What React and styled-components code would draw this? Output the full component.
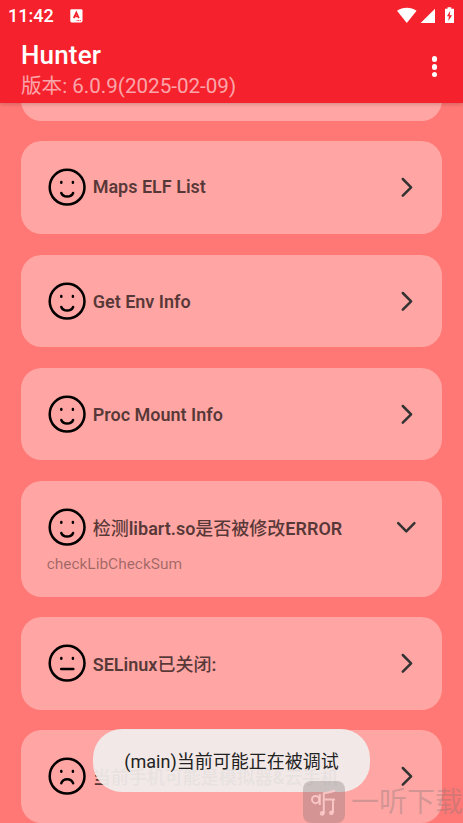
import React from "react";
import styled, { createGlobalStyle } from "styled-components";

const App = () => {
  return (
    <React.Fragment>
      <GlobalStyle />
      <Screen>
        <Header>
          <StatusBar>
            <Clock>11:42</Clock>
            <InputIcon />
            <StatusIcons />
          </StatusBar>
          <ToolBar>
            <div>
              <AppTitle>Hunter</AppTitle>
              <Version>版本: 6.0.9(2025-02-09)</Version>
            </div>
            <MoreButton aria-label="more">
              <Dot />
              <Dot />
              <Dot />
            </MoreButton>
          </ToolBar>
        </Header>
        <List>
          <Card />
          {items.map((item) => (
            <CheckItem key={item.id} {...item} />
          ))}
        </List>
        <Toast>(main)当前可能正在被调试</Toast>
        <Watermark>
          <WatermarkLogo />
          <WatermarkText>一听下载</WatermarkText>
        </Watermark>
      </Screen>
    </React.Fragment>
  );
};

const items = [
  { id: "maps", mood: "happy", title: ["Maps ELF List"], shift: -1 },
  { id: "env", mood: "happy", title: ["Get Env Info"], shift: 3 },
  { id: "mount", mood: "happy", title: ["Proc Mount Info"], shift: 3 },
  {
    id: "libart",
    mood: "happy",
    title: ["", "检测", "libart.so", "是否被修改", "ERROR"],
    detail: "checkLibCheckSum",
    shift: 4,
  },
  { id: "selinux", mood: "flat", title: ["SELinux", "已关闭", ":"], shift: 3 },
  {
    id: "emulator",
    mood: "sad",
    title: ["", "当前手机可能是模拟器", "&", "云手机"],
    shift: 3,
  },
];

const CheckItem = (props) => {
  const { mood, title, detail, shift } = props;

  return (
    <Card $open={!!detail}>
      <Row>
        <Face mood={mood} />
        {/* odd parts of a title are chinese */}
        <Title $shift={shift}>
          {title.map((part, i) =>
            i % 2 ? <Han key={i}>{part}</Han> : <span key={i}>{part}</span>
          )}
        </Title>
        <Arrow open={!!detail} />
      </Row>
      {detail && <Detail>{detail}</Detail>}
    </Card>
  );
};

const mouths = {
  happy: "M14.3 26C16.2 30.8 24.2 30.8 26.1 26",
  flat: "M14.2 26.1H26.3",
  sad: "M14.3 27.2C16.2 21.8 24.2 21.8 26.1 27.2",
};

const Face = ({ mood }) => (
  <FaceSvg viewBox="0 0 40 40">
    <circle cx="20.1" cy="20.2" r="17.4" />
    <path d={mouths[mood]} />
    <path d="M14.3 14.9V15.8M25.9 14.9V15.8" />
  </FaceSvg>
);

const Arrow = ({ open }) => (
  <ArrowSvg viewBox="0 0 24 24">
    <path d={open ? "M4.2 8.2L12.3 16.3L20.4 8.2" : "M8.8 4L17.1 12.3L8.8 20.6"} />
  </ArrowSvg>
);

const InputIcon = () => (
  <svg width="13" height="14" viewBox="0 0 13 14">
    <rect x="0.3" y="0.2" width="12.2" height="13.2" rx="1.4" fill="#fff" />
    <path
      d="M3.7 9.2L6.3 3.6L8.9 9.2M4.8 7.4H7.8"
      fill="none"
      stroke="#f5222d"
      strokeWidth="1.7"
    />
    <path d="M6.6 11.6H11" stroke="#f5222d" strokeWidth="1" strokeDasharray="1 0.6" />
  </svg>
);

const StatusIcons = () => (
  <StatusSvg viewBox="0 0 60 18">
    <path d="M0 3.7C5.6 -0.4 14.1 -0.4 19.6 3.7L9.8 16Z" />
    <path d="M38 1.8V16H23.6Z" />
    <path d="M50.5 0.2h3.8v1.5h2.7v14.3h-9v-14.3h2.5z" />
    <path d="M53.3 3.8L49.9 9.3H51.9L51.3 13.9L55.1 8.2H52.7Z" fill="#f5222d" />
  </StatusSvg>
);

const WatermarkLogo = () => (
  <LogoSvg viewBox="0 0 42 42">
    <rect width="42" height="42" rx="8" fill="rgba(128,118,120,0.34)" />
    <g fill="none" stroke="rgba(255,205,205,0.85)" strokeWidth="2">
      <circle cx="12.6" cy="18.6" r="3.6" />
      <path d="M16.8 13V24M32 9.4C28 12 24 11.4 20.8 12.2V32.4M21 18.4H32M30 18.4V31.6" />
    </g>
    <g fill="rgba(255,205,205,0.85)">
      <circle cx="19.2" cy="32.4" r="2.4" />
      <circle cx="28.4" cy="31.8" r="2.4" />
    </g>
  </LogoSvg>
);

const GlobalStyle = createGlobalStyle`
  * {
    box-sizing: border-box;
  }
  body {
    margin: 0;
    overflow: hidden;
    background: #ff7875;
    font-family: Roboto, "Noto Sans CJK SC", sans-serif;
  }
`;

const Screen = styled.div`
  position: relative;
  display: flex;
  flex-direction: column;
  width: 463px;
  height: 823px;
  overflow: hidden;
  background: #ff7875;
`;

const Header = styled.header`
  flex: none;
  height: 103px;
  background: #f5222d;
  color: #fff;
  box-shadow: 0 1px 4px rgba(0, 0, 0, 0.2);
  z-index: 1;
`;

const StatusBar = styled.div`
  display: flex;
  align-items: center;
  height: 32px;
  padding: 0 8px;
`;

const Clock = styled.span`
  width: 62px;
  font-size: 18px;
  font-weight: 500;
  line-height: 32px;
`;

const StatusSvg = styled.svg`
  width: 60px;
  height: 18px;
  margin-left: auto;
  margin-right: -2px;
  margin-top: -1px;
  fill: #fff;
`;

const ToolBar = styled.div`
  display: flex;
  justify-content: space-between;
  padding: 8px 20.5px 0 21px;
`;

const AppTitle = styled.h1`
  margin: 0;
  font-size: 26px;
  font-weight: 500;
  line-height: 30px;
  letter-spacing: 0.15px;
`;

const Version = styled.p`
  margin: 4px 0 0;
  font-size: 20.6px;
  line-height: 24px;
  color: rgba(255, 255, 255, 0.6);
`;

const MoreButton = styled.button`
  display: flex;
  flex-direction: column;
  align-items: center;
  gap: 2.4px;
  width: 16px;
  padding: 16.4px 0 0;
  border: 0;
  background: none;
`;

const Dot = styled.i`
  width: 5.4px;
  height: 5.4px;
  border-radius: 50%;
  background: #fff;
`;

const List = styled.main`
  display: flex;
  flex-direction: column;
  gap: 20.7px;
  margin-top: -74.6px;
  padding: 0 20.7px;
`;

const Card = styled.section`
  flex: none;
  height: ${(props) => (props.$open ? "115.8px" : "92.4px")};
  padding: 26px 24px 0 26px;
  border-radius: 20.5px;
  background: rgba(255, 255, 255, 0.333);
`;

const Row = styled.div`
  display: flex;
  align-items: center;
  height: 40px;
`;

const FaceSvg = styled.svg`
  flex: none;
  width: 40px;
  height: 40px;
  fill: none;
  stroke: #000;
  stroke-width: 2.5;
  stroke-linecap: round;
`;

const Title = styled.h2`
  flex: 1;
  margin: ${(props) => props.$shift}px 0 0 6px;
  font-size: 18px;
  font-weight: 600;
  line-height: 24px;
  white-space: nowrap;
  color: rgba(0, 0, 0, 0.67);
`;

const Han = styled.span`
  font-weight: 500;
`;

const ArrowSvg = styled.svg`
  flex: none;
  width: 24px;
  height: 24px;
  fill: none;
  stroke: #333;
  stroke-width: 2.5;
  stroke-linecap: round;
  stroke-linejoin: round;
`;

const Detail = styled.p`
  margin: 7.4px 0 0;
  font-size: 15.45px;
  line-height: 20px;
  color: rgba(0, 0, 0, 0.38);
`;

const Toast = styled.div`
  position: absolute;
  left: 93px;
  top: 729px;
  width: 277px;
  height: 63px;
  border-radius: 29px;
  background: rgba(240, 236, 235, 0.94);
  color: #222;
  font-size: 18px;
  line-height: 66px;
  text-align: center;
  white-space: nowrap;
  z-index: 2;
`;

const Watermark = styled.div`
  position: absolute;
  left: 303px;
  top: 781px;
  display: flex;
  align-items: center;
  gap: 6px;
  z-index: 3;
`;

const LogoSvg = styled.svg`
  flex: none;
  width: 42px;
  height: 42px;
`;

const WatermarkText = styled.span`
  padding-top: 2px;
  font-size: 28px;
  font-weight: 400;
  line-height: 40px;
  white-space: nowrap;
  color: rgba(128, 118, 120, 0.34);
`;

export default App;
